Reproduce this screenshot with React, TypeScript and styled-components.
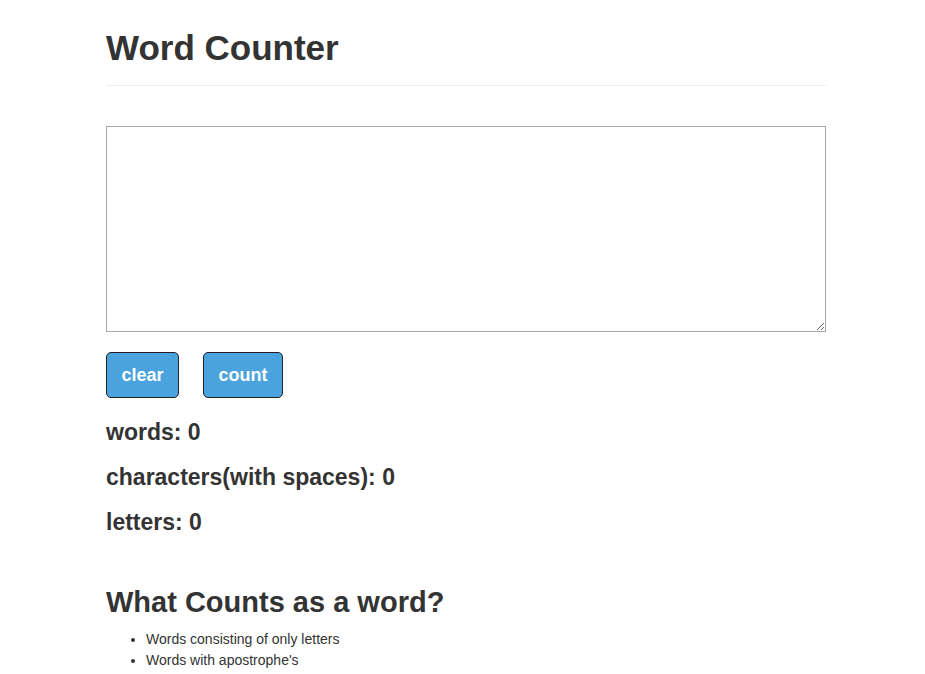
import React, { useState } from "react";
import styled, { createGlobalStyle } from "styled-components";

const GlobalStyle = createGlobalStyle`
  html, body { margin: 0; padding: 0; background: #fff; }
  body {
    font-family: "Liberation Sans", Arial, Helvetica, sans-serif;
    font-size: 14px;
    line-height: 1.42857;
    color: #333;
  }
  * { box-sizing: border-box; }
`;

const Page = styled.div`
  padding-left: 7px;
`;

const Container = styled.div`
  width: 720px;
  margin: 0 auto;
`;

const Header = styled.div`
  padding-top: 28px;
  padding-bottom: 17px;
  border-bottom: 1px solid #eee;
  margin-bottom: 40px;
`;

const Title = styled.h1`
  margin: 0;
  font-size: 35px;
  font-weight: 600;
  line-height: 40px;
  color: #333;
`;

const TextArea = styled.textarea`
  display: block;
  width: 720px;
  height: 206px;
  border: 1px solid #a9a9a9;
  margin: 0;
  padding: 2px;
  font-family: "Liberation Mono", monospace;
  font-size: 13px;
  resize: both;
`;

const Buttons = styled.div`
  display: flex;
  gap: 24px;
  margin-top: 20px;
`;

const Button = styled.button<{ $w: number }>`
  width: ${(p) => p.$w}px;
  height: 46px;
  background: #4aa3dc;
  color: #fff;
  border: 1px solid #222;
  border-radius: 5px;
  font-family: "Liberation Sans", Arial, sans-serif;
  font-size: 18px;
  font-weight: 600;
  padding: 0;
  cursor: pointer;
`;

const Stats = styled.div`
  margin-top: 21px;
  display: flex;
  flex-direction: column;
  gap: 19px;
`;

const Stat = styled.h3`
  margin: 0;
  font-size: 23px;
  font-weight: 600;
  line-height: 26px;
  color: #333;
`;

const SubTitle = styled.h2`
  margin: 51px 0 0;
  font-size: 29px;
  font-weight: 600;
  line-height: 33px;
  color: #333;
`;

const List = styled.ul`
  margin: 10px 0 0;
  padding-left: 40px;
  font-size: 14px;
  line-height: 21px;
`;

export default function App() {
  const [text, setText] = useState("");
  const [counts, setCounts] = useState({ words: 0, chars: 0, letters: 0 });
  const count = () => {
    const words = text.split(/\s+/).filter((w) => /^[A-Za-z'-]+$/.test(w)).length;
    setCounts({ words, chars: text.length, letters: (text.match(/[A-Za-z]/g) || []).length });
  };
  return (
    <Page>
      <GlobalStyle />
      <Container>
        <Header>
          <Title>Word Counter</Title>
        </Header>
        <TextArea value={text} onChange={(e) => setText(e.target.value)} />
        <Buttons>
          <Button $w={73} onClick={() => { setText(""); setCounts({ words: 0, chars: 0, letters: 0 }); }}>clear</Button>
          <Button $w={80} onClick={count}>count</Button>
        </Buttons>
        <Stats>
          <Stat>words: {counts.words}</Stat>
          <Stat>characters(with spaces): {counts.chars}</Stat>
          <Stat>letters: {counts.letters}</Stat>
        </Stats>
        <SubTitle>What Counts as a word?</SubTitle>
        <List>
          <li>Words consisting of only letters</li>
          <li>Words with apostrophe's</li>
          <li>Words with hyphens</li>
        </List>
      </Container>
    </Page>
  );
}
